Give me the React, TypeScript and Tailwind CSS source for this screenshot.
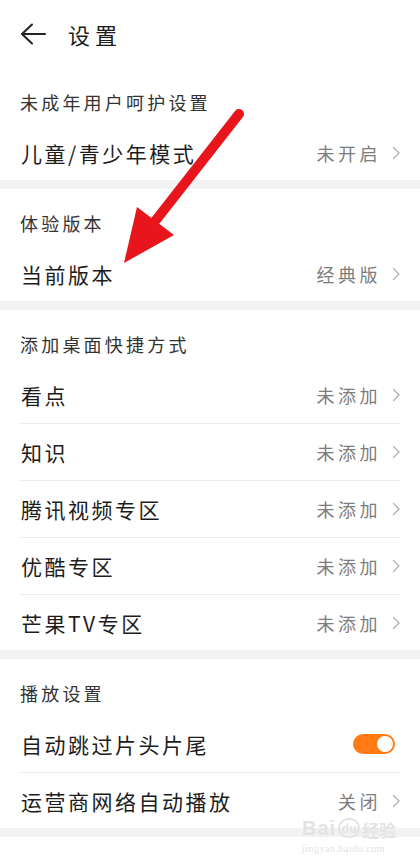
import React from "react";

const font = { fontFamily: '"Noto Sans CJK SC", "Noto Sans", sans-serif' };

type Row = { label: string; value?: string; toggle?: boolean };
type Section = { title: string; rows: Row[] };

const sections: Section[] = [
  { title: "未成年用户呵护设置", rows: [{ label: "儿童/青少年模式", value: "未开启" }] },
  { title: "体验版本", rows: [{ label: "当前版本", value: "经典版" }] },
  {
    title: "添加桌面快捷方式",
    rows: [
      { label: "看点", value: "未添加" },
      { label: "知识", value: "未添加" },
      { label: "腾讯视频专区", value: "未添加" },
      { label: "优酷专区", value: "未添加" },
      { label: "芒果TV专区", value: "未添加" },
    ],
  },
  {
    title: "播放设置",
    rows: [
      { label: "自动跳过片头片尾", toggle: true },
      { label: "运营商网络自动播放", value: "关闭" },
    ],
  },
];

function Chevron() {
  return (
    <svg width="9" height="14" viewBox="0 0 9 14" fill="none">
      <polyline points="1.5,1.5 7,7 1.5,12.5" stroke="#b3b3b3" strokeWidth="1.4" strokeLinecap="round" strokeLinejoin="round" />
    </svg>
  );
}

function Toggle() {
  return (
    <div className="w-[42px] h-[20px] rounded-full bg-[#ff7a12] flex items-center justify-end pr-[2px]">
      <div className="w-[16px] h-[16px] rounded-full bg-white" />
    </div>
  );
}

function SettingRow({ row }: { row: Row }) {
  return (
    <div className="mx-[19px] h-[57px] last:h-[55px] flex items-center justify-between border-b border-[#ededed] last:border-b-0">
      <span className="pl-[2px] text-[21px] tracking-[2.5px] text-[#1c1c1c] leading-[26px]">{row.label}</span>
      {row.toggle ? (
        <div className="pr-[6px]">
          <Toggle />
        </div>
      ) : (
        <div className="flex items-center gap-[11px]">
          <span className="text-[18px] tracking-[3.5px] text-[#7d7d7d] leading-[24px]">{row.value}</span>
          <Chevron />
        </div>
      )}
    </div>
  );
}

export default function App() {
  return (
    <div className="relative w-[420px] min-h-[860px] bg-white overflow-hidden" style={font}>
      {/* title bar */}
      <div className="h-[68px] flex items-center pl-[20px] gap-[22px]">
        <svg width="26" height="22" viewBox="0 0 26 22" fill="none">
          <line x1="2" y1="11" x2="25" y2="11" stroke="#222" strokeWidth="2" strokeLinecap="round" />
          <polyline points="12,1.5 2,11 12,20.5" stroke="#222" strokeWidth="2" strokeLinecap="round" strokeLinejoin="round" />
        </svg>
        <span className="text-[22px] tracking-[5px] text-[#1c1c1c] leading-[28px]">设置</span>
      </div>

      {sections.map((s) => (
        <div key={s.title}>
          <div className="bg-white">
            <div className="pt-[22px] pb-[11px] pl-[20px] text-[18px] tracking-[3.2px] text-[#333] leading-[24px]">
              {s.title}
            </div>
            {s.rows.map((r) => (
              <SettingRow key={r.label} row={r} />
            ))}
          </div>
          <div className="h-[9px] bg-[#f2f2f2]" />
        </div>
      ))}

      {/* watermark */}
      <div className="absolute left-[302px] top-[818px] flex flex-col items-start text-[#e3e3e3] select-none">
        <div className="flex items-end gap-[2px] leading-none">
          <span className="text-[20px] font-bold tracking-[1px]" style={{ fontFamily: '"Liberation Sans", sans-serif' }}>Bai</span>
          <span className="w-[22px] h-[20px] rounded-full border-2 border-[#e3e3e3] text-[12px] font-bold flex items-center justify-center">du</span>
          <span className="text-[17px] font-bold">经验</span>
        </div>
        <span className="text-[10px] mt-[3px] tracking-[0.5px]" style={{ fontFamily: '"Liberation Serif", serif' }}>jingyan.baidu.com</span>
      </div>

      {/* red annotation arrow */}
      <svg className="absolute left-0 top-0 pointer-events-none" width="420" height="860" viewBox="0 0 420 860">
        <line x1="239" y1="114" x2="156" y2="220" stroke="#e8151d" strokeWidth="10" strokeLinecap="round" />
        <polygon points="137,207 174,235 124,263" fill="#e8151d" />
      </svg>
    </div>
  );
}
